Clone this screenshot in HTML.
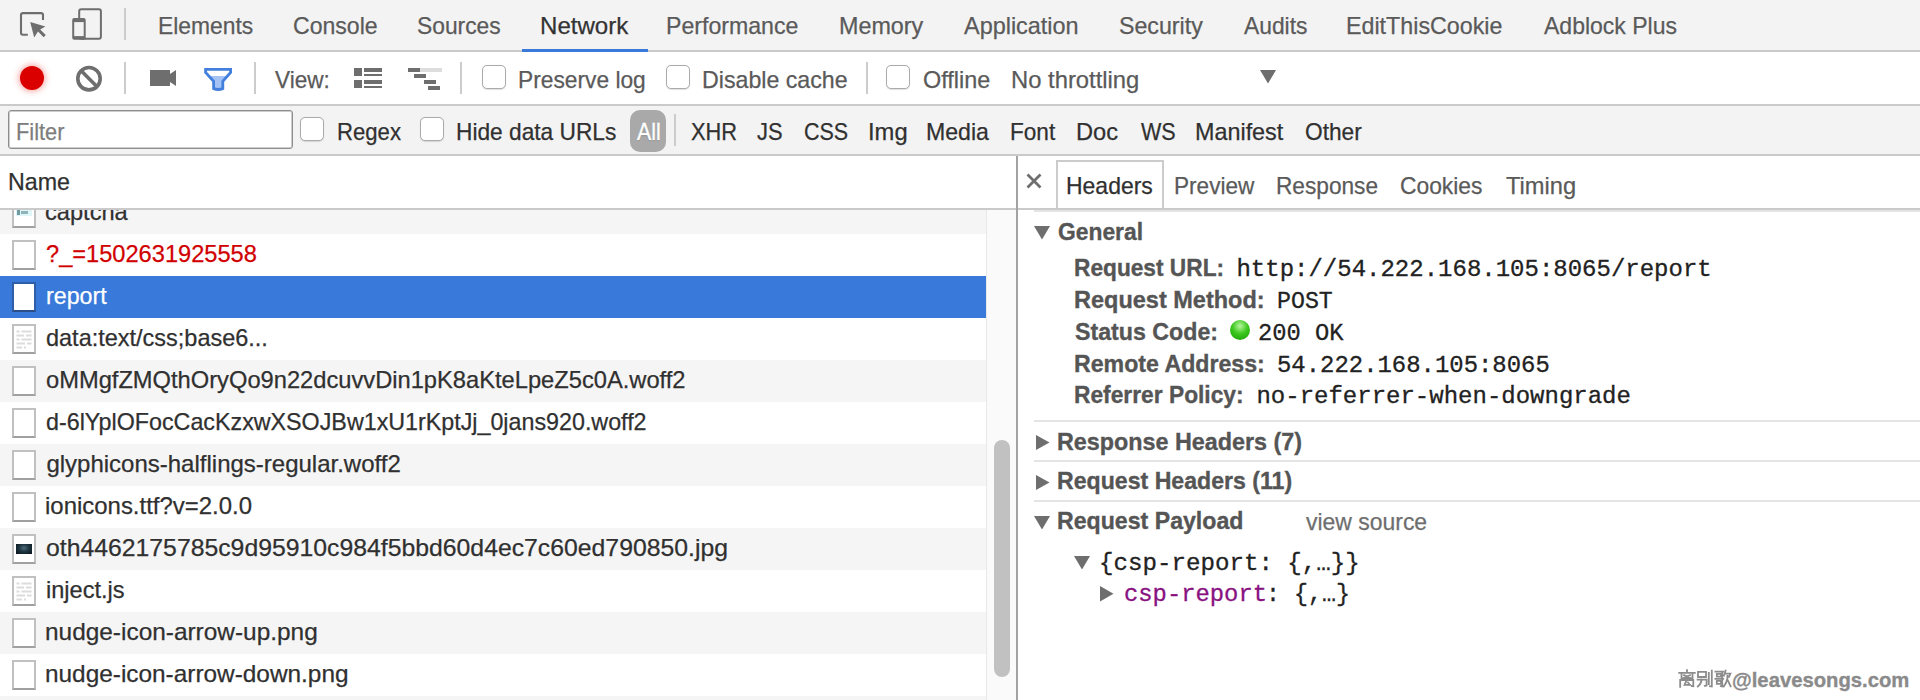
<!DOCTYPE html>
<html><head><meta charset="utf-8"><title>DevTools Network</title>
<style>
html,body{margin:0;padding:0;width:1920px;height:700px;overflow:hidden;background:#fff;font-family:"Liberation Sans",sans-serif;}
#root{position:relative;width:1920px;height:700px;overflow:hidden;}
#root div{position:absolute;}
</style></head><body><div id="root">
<div style="left:0px;top:0px;width:1920px;height:50px;background:#f3f3f3;"></div><div style="left:0px;top:50px;width:1920px;height:2px;background:#cacaca;"></div><svg style="position:absolute;left:14px;top:8px;" width="36" height="34" viewBox="0 0 36 34"><path d="M13.8 26.8 H9 Q7 26.8 7 24.8 V7.1 Q7 5.1 9 5.1 H27 Q29 5.1 29 7.1 V11.9" fill="none" stroke="#6e6e6e" stroke-width="2.1"/><path d="M16.2 14 L31.4 18.6 L26.2 21.4 L31.8 27 L29.6 29.2 L24 23.6 L20.2 29.4 Z" fill="#6e6e6e"/></svg><svg style="position:absolute;left:70px;top:6px;" width="36" height="38" viewBox="0 0 36 38"><rect x="9.2" y="3.2" width="21.7" height="29.5" rx="2" fill="none" stroke="#6e6e6e" stroke-width="2"/><rect x="2.2" y="12.1" width="13.5" height="21.6" rx="2" fill="#6e6e6e"/><rect x="4.2" y="16.1" width="9.5" height="14" fill="#f3f3f3"/></svg><div style="left:124px;top:8px;width:2px;height:32px;background:#cccccc;"></div><div id="t0" style="left:157.50px;top:14.18px;font:400 24px/24px 'Liberation Sans', sans-serif;color:#5a5a5a;white-space:pre;-webkit-text-stroke:0.25px #5a5a5a;transform:scaleX(0.9509);transform-origin:0 0;">Elements</div><div id="t1" style="left:293.44px;top:14.18px;font:400 24px/24px 'Liberation Sans', sans-serif;color:#5a5a5a;white-space:pre;-webkit-text-stroke:0.25px #5a5a5a;transform:scaleX(0.9610);transform-origin:0 0;">Console</div><div id="t2" style="left:417.45px;top:14.18px;font:400 24px/24px 'Liberation Sans', sans-serif;color:#5a5a5a;white-space:pre;-webkit-text-stroke:0.25px #5a5a5a;transform:scaleX(0.9504);transform-origin:0 0;">Sources</div><div id="t3" style="left:539.89px;top:14.18px;font:400 24px/24px 'Liberation Sans', sans-serif;color:#333333;white-space:pre;-webkit-text-stroke:0.25px #333333;transform:scaleX(1.0028);transform-origin:0 0;">Network</div><div id="t4" style="left:666.47px;top:14.18px;font:400 24px/24px 'Liberation Sans', sans-serif;color:#5a5a5a;white-space:pre;-webkit-text-stroke:0.25px #5a5a5a;transform:scaleX(0.9638);transform-origin:0 0;">Performance</div><div id="t5" style="left:838.96px;top:14.18px;font:400 24px/24px 'Liberation Sans', sans-serif;color:#5a5a5a;white-space:pre;-webkit-text-stroke:0.25px #5a5a5a;transform:scaleX(0.9720);transform-origin:0 0;">Memory</div><div id="t6" style="left:964.40px;top:14.18px;font:400 24px/24px 'Liberation Sans', sans-serif;color:#5a5a5a;white-space:pre;-webkit-text-stroke:0.25px #5a5a5a;transform:scaleX(0.9761);transform-origin:0 0;">Application</div><div id="t7" style="left:1118.93px;top:14.18px;font:400 24px/24px 'Liberation Sans', sans-serif;color:#5a5a5a;white-space:pre;-webkit-text-stroke:0.25px #5a5a5a;transform:scaleX(0.9664);transform-origin:0 0;">Security</div><div id="t8" style="left:1244.40px;top:14.18px;font:400 24px/24px 'Liberation Sans', sans-serif;color:#5a5a5a;white-space:pre;-webkit-text-stroke:0.25px #5a5a5a;transform:scaleX(0.9507);transform-origin:0 0;">Audits</div><div id="t9" style="left:1346.46px;top:14.18px;font:400 24px/24px 'Liberation Sans', sans-serif;color:#5a5a5a;white-space:pre;-webkit-text-stroke:0.25px #5a5a5a;transform:scaleX(0.9692);transform-origin:0 0;">EditThisCookie</div><div id="t10" style="left:1544.40px;top:14.18px;font:400 24px/24px 'Liberation Sans', sans-serif;color:#5a5a5a;white-space:pre;-webkit-text-stroke:0.25px #5a5a5a;transform:scaleX(0.9582);transform-origin:0 0;">Adblock Plus</div><div style="left:522px;top:49px;width:126px;height:3px;background:#3879d9;"></div><div style="left:0px;top:52px;width:1920px;height:52px;background:#ffffff;"></div><div style="left:0px;top:104px;width:1920px;height:2px;background:#cacaca;"></div><div style="left:20px;top:66px;width:24px;height:24px;border-radius:50%;background:#db0000;box-shadow:0 0 6px 1px rgba(240,60,60,.5)"></div><svg style="position:absolute;left:74px;top:64px;" width="30" height="30" viewBox="0 0 30 30"><circle cx="15" cy="14.7" r="11.2" fill="none" stroke="#6e6e6e" stroke-width="3.6"/><path d="M7.4 7.1 L22.6 22.3" stroke="#6e6e6e" stroke-width="3.6"/></svg><div style="left:124px;top:62px;width:2px;height:32px;background:#cccccc;"></div><svg style="position:absolute;left:148px;top:66px;" width="32" height="24" viewBox="0 0 32 24"><rect x="2" y="4" width="20" height="16" fill="#6e6e6e"/><path d="M22 8 L28 4 V20 L22 16 Z" fill="#6e6e6e"/></svg><svg style="position:absolute;left:200px;top:64px;" width="36" height="32" viewBox="0 0 36 32"><defs><linearGradient id="fg" gradientUnits="userSpaceOnUse" x1="0" y1="0" x2="0" y2="32"><stop offset="0.38" stop-color="#ffffff"/><stop offset="0.38" stop-color="#a4c2f4"/></linearGradient></defs><path d="M5.6 5.4 H30.6 V8.4 L22.8 17.2 V24.6 Q18.2 26.4 13.6 24.6 V17.2 L5.6 8.4 Z" fill="url(#fg)" stroke="#4380dd" stroke-width="2.8" stroke-linejoin="miter"/></svg><div style="left:254px;top:62px;width:2px;height:32px;background:#cccccc;"></div><div id="t11" style="left:275.40px;top:67.68px;font:400 24px/24px 'Liberation Sans', sans-serif;color:#5a5a5a;white-space:pre;-webkit-text-stroke:0.25px #5a5a5a;transform:scaleX(0.9406);transform-origin:0 0;">View:</div><svg style="position:absolute;left:350px;top:64px;" width="36" height="28" viewBox="0 0 36 28"><rect x="4" y="4" width="8" height="8" fill="#6e6e6e"/><rect x="14" y="4" width="18" height="4" fill="#6e6e6e"/><rect x="14" y="10" width="18" height="2" fill="#6e6e6e"/><rect x="4" y="16" width="8" height="8" fill="#6e6e6e"/><rect x="14" y="16" width="18" height="4" fill="#6e6e6e"/><rect x="14" y="22" width="18" height="2" fill="#6e6e6e"/></svg><svg style="position:absolute;left:404px;top:64px;" width="42" height="30" viewBox="0 0 42 30"><rect x="4" y="4" width="34" height="4" fill="#dddddd"/><rect x="4" y="4" width="12" height="4" fill="#6e6e6e"/><rect x="10" y="10" width="12" height="4" fill="#6e6e6e"/><rect x="20" y="16" width="12" height="4" fill="#6e6e6e"/><rect x="24" y="22" width="12" height="4" fill="#6e6e6e"/></svg><div style="left:460px;top:62px;width:2px;height:32px;background:#cccccc;"></div><div style="left:482px;top:65px;width:22px;height:22px;border:1px solid #ababab;border-radius:5px;background:#fff;box-shadow:0 0.5px 1px rgba(0,0,0,.12)"></div><div id="t12" style="left:517.50px;top:67.68px;font:400 24px/24px 'Liberation Sans', sans-serif;color:#5a5a5a;white-space:pre;-webkit-text-stroke:0.25px #5a5a5a;transform:scaleX(0.9483);transform-origin:0 0;">Preserve log</div><div style="left:666px;top:65px;width:22px;height:22px;border:1px solid #ababab;border-radius:5px;background:#fff;box-shadow:0 0.5px 1px rgba(0,0,0,.12)"></div><div id="t13" style="left:701.72px;top:67.68px;font:400 24px/24px 'Liberation Sans', sans-serif;color:#5a5a5a;white-space:pre;-webkit-text-stroke:0.25px #5a5a5a;transform:scaleX(0.9660);transform-origin:0 0;">Disable cache</div><div style="left:866px;top:62px;width:2px;height:32px;background:#cccccc;"></div><div style="left:886px;top:65px;width:22px;height:22px;border:1px solid #ababab;border-radius:5px;background:#fff;box-shadow:0 0.5px 1px rgba(0,0,0,.12)"></div><div id="t14" style="left:922.67px;top:67.68px;font:400 24px/24px 'Liberation Sans', sans-serif;color:#5a5a5a;white-space:pre;-webkit-text-stroke:0.25px #5a5a5a;transform:scaleX(0.9760);transform-origin:0 0;">Offline</div><div id="t15" style="left:1010.92px;top:67.68px;font:400 24px/24px 'Liberation Sans', sans-serif;color:#5a5a5a;white-space:pre;-webkit-text-stroke:0.25px #5a5a5a;transform:scaleX(0.9918);transform-origin:0 0;">No throttling</div><svg style="position:absolute;left:1258px;top:68px;" width="20" height="18" viewBox="0 0 20 18"><path d="M2 2 H18 L10 15.5 Z" fill="#6e6e6e"/></svg><div style="left:0px;top:106px;width:1920px;height:48px;background:#f3f3f3;"></div><div style="left:0px;top:154px;width:1920px;height:2px;background:#cacaca;"></div><div style="left:8px;top:110px;width:283px;height:37px;border:1px solid #8e8e8e;border-radius:3px;background:#fff;box-shadow:inset 0 0 0 1px #cdcdcd"></div><div id="t16" style="left:16.09px;top:119.93px;font:400 24px/24px 'Liberation Sans', sans-serif;color:#7d7d7d;white-space:pre;-webkit-text-stroke:0.25px #7d7d7d;transform:scaleX(0.9073);transform-origin:0 0;">Filter</div><div style="left:300px;top:117px;width:22px;height:22px;border:1px solid #ababab;border-radius:5px;background:#fff;box-shadow:0 0.5px 1px rgba(0,0,0,.12)"></div><div id="t17" style="left:336.81px;top:120.18px;font:400 24px/24px 'Liberation Sans', sans-serif;color:#303030;white-space:pre;-webkit-text-stroke:0.25px #303030;transform:scaleX(0.9216);transform-origin:0 0;">Regex</div><div style="left:420px;top:117px;width:22px;height:22px;border:1px solid #ababab;border-radius:5px;background:#fff;box-shadow:0 0.5px 1px rgba(0,0,0,.12)"></div><div id="t18" style="left:456.26px;top:120.18px;font:400 24px/24px 'Liberation Sans', sans-serif;color:#303030;white-space:pre;-webkit-text-stroke:0.25px #303030;transform:scaleX(0.9463);transform-origin:0 0;">Hide data URLs</div><div style="left:630px;top:110px;width:36px;height:42px;border-radius:10px;background:#a9a9a9"></div><div id="t19" style="left:636.86px;top:120.18px;font:400 24px/24px 'Liberation Sans', sans-serif;color:#ffffff;white-space:pre;-webkit-text-stroke:0.25px #ffffff;transform:scaleX(0.8864);transform-origin:0 0;text-shadow:0 1px 1px rgba(0,0,0,.4);-webkit-text-stroke:0.5px #fff;">All</div><div style="left:674px;top:114px;width:2px;height:32px;background:#cccccc;"></div><div id="t20" style="left:690.95px;top:120.18px;font:400 24px/24px 'Liberation Sans', sans-serif;color:#303030;white-space:pre;-webkit-text-stroke:0.25px #303030;transform:scaleX(0.9084);transform-origin:0 0;">XHR</div><div id="t21" style="left:757.00px;top:120.18px;font:400 24px/24px 'Liberation Sans', sans-serif;color:#303030;white-space:pre;-webkit-text-stroke:0.25px #303030;transform:scaleX(0.9124);transform-origin:0 0;">JS</div><div id="t22" style="left:803.76px;top:120.18px;font:400 24px/24px 'Liberation Sans', sans-serif;color:#303030;white-space:pre;-webkit-text-stroke:0.25px #303030;transform:scaleX(0.8946);transform-origin:0 0;">CSS</div><div id="t23" style="left:867.67px;top:120.18px;font:400 24px/24px 'Liberation Sans', sans-serif;color:#303030;white-space:pre;-webkit-text-stroke:0.25px #303030;transform:scaleX(0.9905);transform-origin:0 0;">Img</div><div id="t24" style="left:926.47px;top:120.18px;font:400 24px/24px 'Liberation Sans', sans-serif;color:#303030;white-space:pre;-webkit-text-stroke:0.25px #303030;transform:scaleX(0.9630);transform-origin:0 0;">Media</div><div id="t25" style="left:1010.27px;top:120.18px;font:400 24px/24px 'Liberation Sans', sans-serif;color:#303030;white-space:pre;-webkit-text-stroke:0.25px #303030;transform:scaleX(0.9408);transform-origin:0 0;">Font</div><div id="t26" style="left:1076.43px;top:120.18px;font:400 24px/24px 'Liberation Sans', sans-serif;color:#303030;white-space:pre;-webkit-text-stroke:0.25px #303030;transform:scaleX(0.9847);transform-origin:0 0;">Doc</div><div id="t27" style="left:1140.90px;top:120.18px;font:400 24px/24px 'Liberation Sans', sans-serif;color:#303030;white-space:pre;-webkit-text-stroke:0.25px #303030;transform:scaleX(0.8980);transform-origin:0 0;">WS</div><div id="t28" style="left:1195.20px;top:120.18px;font:400 24px/24px 'Liberation Sans', sans-serif;color:#303030;white-space:pre;-webkit-text-stroke:0.25px #303030;transform:scaleX(0.9733);transform-origin:0 0;">Manifest</div><div id="t29" style="left:1304.96px;top:120.18px;font:400 24px/24px 'Liberation Sans', sans-serif;color:#303030;white-space:pre;-webkit-text-stroke:0.25px #303030;transform:scaleX(0.9450);transform-origin:0 0;">Other</div><div style="left:0px;top:156px;width:1016px;height:544px;background:#ffffff;"></div><div style="left:0;top:210px;width:986px;height:490px;overflow:hidden"><div style="left:0px;top:-18px;width:986px;height:42px;background:#f5f5f5;"></div><div style="left:12px;top:-12px;width:20px;height:26px;border:2px solid #c0c0c0;border-bottom:2px solid #a0a0a0;background:#ffffff"></div><div style="left:16px;top:0px;width:16px;height:6px;background:#dff5f7;"></div><div style="left:17px;top:0px;width:2.5px;height:5px;background:#6f9aa0;"></div><div style="left:20.5px;top:1px;width:7px;height:3px;background:#8fb4b8;"></div><div id="t30" style="left:45.32px;top:-9.82px;font:400 24px/24px 'Liberation Sans', sans-serif;color:#303030;white-space:pre;-webkit-text-stroke:0.25px #303030;transform:scaleX(0.9845);transform-origin:0 0;">captcha</div><div style="left:0px;top:24px;width:986px;height:42px;background:#ffffff;"></div><div style="left:12px;top:30px;width:20px;height:26px;border:2px solid #c0c0c0;border-bottom:2px solid #a0a0a0;background:#ffffff"></div><div id="t31" style="left:46.40px;top:32.18px;font:400 24px/24px 'Liberation Sans', sans-serif;color:#d10000;white-space:pre;-webkit-text-stroke:0.25px #d10000;transform:scaleX(0.9841);transform-origin:0 0;">?_=1502631925558</div><div style="left:0px;top:66px;width:986px;height:42px;background:#3879d9;"></div><div style="left:12px;top:72px;width:20px;height:26px;border:2px solid #2e5ea8;border-bottom:2px solid #2b4f88;background:#ffffff"></div><div id="t32" style="left:45.51px;top:74.18px;font:400 24px/24px 'Liberation Sans', sans-serif;color:#ffffff;white-space:pre;-webkit-text-stroke:0.25px #ffffff;transform:scaleX(0.9685);transform-origin:0 0;">report</div><div style="left:0px;top:108px;width:986px;height:42px;background:#ffffff;"></div><div style="left:12px;top:114px;width:20px;height:26px;border:2px solid #c0c0c0;border-bottom:2px solid #a0a0a0;background:#ffffff"></div><svg style="position:absolute;left:12px;top:114px" width="24" height="30"><rect x="4.5" y="6.5" width="3.0" height="2" fill="#dcdcdc"/><rect x="9.5" y="6.5" width="10.0" height="2" fill="#dcdcdc"/><rect x="4.5" y="10.5" width="7.5" height="2" fill="#dcdcdc"/><rect x="14" y="10.5" width="5.5" height="2" fill="#dcdcdc"/><rect x="4.5" y="14.5" width="3.0" height="2" fill="#dcdcdc"/><rect x="9.5" y="14.5" width="10.0" height="2" fill="#dcdcdc"/><rect x="4.5" y="18.5" width="8.5" height="2" fill="#dcdcdc"/><rect x="15" y="18.5" width="4.5" height="2" fill="#dcdcdc"/><rect x="4.5" y="22.5" width="5.5" height="2" fill="#dcdcdc"/><rect x="12" y="22.5" width="2" height="2" fill="#dcdcdc"/></svg><div id="t33" style="left:46.40px;top:116.18px;font:400 24px/24px 'Liberation Sans', sans-serif;color:#303030;white-space:pre;-webkit-text-stroke:0.25px #303030;transform:scaleX(0.9783);transform-origin:0 0;">data:text/css;base6...</div><div style="left:0px;top:150px;width:986px;height:42px;background:#f5f5f5;"></div><div style="left:12px;top:156px;width:20px;height:26px;border:2px solid #c0c0c0;border-bottom:2px solid #a0a0a0;background:#ffffff"></div><div id="t34" style="left:46.39px;top:158.18px;font:400 24px/24px 'Liberation Sans', sans-serif;color:#303030;white-space:pre;-webkit-text-stroke:0.25px #303030;transform:scaleX(0.9871);transform-origin:0 0;">oMMgfZMQthOryQo9n22dcuvvDin1pK8aKteLpeZ5c0A.woff2</div><div style="left:0px;top:192px;width:986px;height:42px;background:#ffffff;"></div><div style="left:12px;top:198px;width:20px;height:26px;border:2px solid #c0c0c0;border-bottom:2px solid #a0a0a0;background:#ffffff"></div><div id="t35" style="left:46.41px;top:200.18px;font:400 24px/24px 'Liberation Sans', sans-serif;color:#303030;white-space:pre;-webkit-text-stroke:0.25px #303030;transform:scaleX(0.9696);transform-origin:0 0;">d-6lYplOFocCacKzxwXSOJBw1xU1rKptJj_0jans920.woff2</div><div style="left:0px;top:234px;width:986px;height:42px;background:#f5f5f5;"></div><div style="left:12px;top:240px;width:20px;height:26px;border:2px solid #c0c0c0;border-bottom:2px solid #a0a0a0;background:#ffffff"></div><div id="t36" style="left:46.38px;top:242.18px;font:400 24px/24px 'Liberation Sans', sans-serif;color:#303030;white-space:pre;-webkit-text-stroke:0.25px #303030;">glyphicons-halflings-regular.woff2</div><div style="left:0px;top:276px;width:986px;height:42px;background:#ffffff;"></div><div style="left:12px;top:282px;width:20px;height:26px;border:2px solid #c0c0c0;border-bottom:2px solid #a0a0a0;background:#ffffff"></div><div id="t37" style="left:45.48px;top:284.18px;font:400 24px/24px 'Liberation Sans', sans-serif;color:#303030;white-space:pre;-webkit-text-stroke:0.25px #303030;transform:scaleX(0.9977);transform-origin:0 0;">ionicons.ttf?v=2.0.0</div><div style="left:0px;top:318px;width:986px;height:42px;background:#f5f5f5;"></div><div style="left:12px;top:324px;width:20px;height:26px;border:2px solid #c0c0c0;border-bottom:2px solid #a0a0a0;background:#ffffff"></div><div style="left:16px;top:334px;width:16px;height:10px;background:radial-gradient(ellipse at 50% 40%, #4d6a78 0%, #1d3440 45%, #0a1216 100%)"></div><div id="t38" style="left:46.35px;top:326.18px;font:400 24px/24px 'Liberation Sans', sans-serif;color:#303030;white-space:pre;-webkit-text-stroke:0.25px #303030;transform:scaleX(1.0323);transform-origin:0 0;">oth4462175785c9d95910c984f5bbd60d4ec7c60ed790850.jpg</div><div style="left:0px;top:360px;width:986px;height:42px;background:#ffffff;"></div><div style="left:12px;top:366px;width:20px;height:26px;border:2px solid #c0c0c0;border-bottom:2px solid #a0a0a0;background:#ffffff"></div><svg style="position:absolute;left:12px;top:366px" width="24" height="30"><rect x="4.5" y="6.5" width="3.0" height="2" fill="#dcdcdc"/><rect x="9.5" y="6.5" width="10.0" height="2" fill="#dcdcdc"/><rect x="4.5" y="10.5" width="7.5" height="2" fill="#dcdcdc"/><rect x="14" y="10.5" width="5.5" height="2" fill="#dcdcdc"/><rect x="4.5" y="14.5" width="3.0" height="2" fill="#dcdcdc"/><rect x="9.5" y="14.5" width="10.0" height="2" fill="#dcdcdc"/><rect x="4.5" y="18.5" width="8.5" height="2" fill="#dcdcdc"/><rect x="15" y="18.5" width="4.5" height="2" fill="#dcdcdc"/><rect x="4.5" y="22.5" width="5.5" height="2" fill="#dcdcdc"/><rect x="12" y="22.5" width="2" height="2" fill="#dcdcdc"/></svg><div id="t39" style="left:45.50px;top:368.18px;font:400 24px/24px 'Liberation Sans', sans-serif;color:#303030;white-space:pre;-webkit-text-stroke:0.25px #303030;transform:scaleX(0.9826);transform-origin:0 0;">inject.js</div><div style="left:0px;top:402px;width:986px;height:42px;background:#f5f5f5;"></div><div style="left:12px;top:408px;width:20px;height:26px;border:2px solid #c0c0c0;border-bottom:2px solid #a0a0a0;background:#ffffff"></div><div id="t40" style="left:45.46px;top:410.18px;font:400 24px/24px 'Liberation Sans', sans-serif;color:#303030;white-space:pre;-webkit-text-stroke:0.25px #303030;transform:scaleX(1.0170);transform-origin:0 0;">nudge-icon-arrow-up.png</div><div style="left:0px;top:444px;width:986px;height:42px;background:#ffffff;"></div><div style="left:12px;top:450px;width:20px;height:26px;border:2px solid #c0c0c0;border-bottom:2px solid #a0a0a0;background:#ffffff"></div><div id="t41" style="left:45.46px;top:452.18px;font:400 24px/24px 'Liberation Sans', sans-serif;color:#303030;white-space:pre;-webkit-text-stroke:0.25px #303030;transform:scaleX(1.0156);transform-origin:0 0;">nudge-icon-arrow-down.png</div><div style="left:0px;top:486px;width:986px;height:42px;background:#f5f5f5;"></div></div><div style="left:0px;top:156px;width:1016px;height:52px;background:#ffffff;"></div><div id="t42" style="left:7.92px;top:169.98px;font:400 24px/24px 'Liberation Sans', sans-serif;color:#303030;white-space:pre;-webkit-text-stroke:0.25px #303030;transform:scaleX(0.9685);transform-origin:0 0;">Name</div><div style="left:0px;top:208px;width:1016px;height:2px;background:#cacaca;"></div><div style="left:986px;top:210px;width:30px;height:490px;background:#fafafa;border-left:1px solid #e8e8e8;box-sizing:border-box;"></div><div style="left:994px;top:440px;width:16px;height:237px;border-radius:8px;background:#c1c1c1"></div><div style="left:1016px;top:156px;width:2px;height:544px;background:#a3a3a3;"></div><div style="left:1018px;top:156px;width:902px;height:544px;background:#ffffff;"></div><div style="left:1018px;top:208px;width:902px;height:2px;background:#cacaca;"></div><div style="left:1034px;top:210px;width:886px;height:2px;background:#e4e4e4;"></div><svg style="position:absolute;left:1024px;top:171px;" width="20" height="20" viewBox="0 0 20 20"><path d="M3.5 3.5 L16.5 16.5 M16.5 3.5 L3.5 16.5" stroke="#6e6e6e" stroke-width="2.8"/></svg><div style="left:1056px;top:160px;width:104px;height:46px;border:2px solid #cccccc;border-bottom:none;background:#fff"></div><div id="t43" style="left:1065.99px;top:173.98px;font:400 24px/24px 'Liberation Sans', sans-serif;color:#303030;white-space:pre;-webkit-text-stroke:0.25px #303030;transform:scaleX(0.9573);transform-origin:0 0;">Headers</div><div id="t44" style="left:1173.52px;top:173.98px;font:400 24px/24px 'Liberation Sans', sans-serif;color:#5a5a5a;white-space:pre;-webkit-text-stroke:0.25px #5a5a5a;transform:scaleX(0.9418);transform-origin:0 0;">Preview</div><div id="t45" style="left:1276.01px;top:173.98px;font:400 24px/24px 'Liberation Sans', sans-serif;color:#5a5a5a;white-space:pre;-webkit-text-stroke:0.25px #5a5a5a;transform:scaleX(0.9444);transform-origin:0 0;">Response</div><div id="t46" style="left:1400.45px;top:173.98px;font:400 24px/24px 'Liberation Sans', sans-serif;color:#5a5a5a;white-space:pre;-webkit-text-stroke:0.25px #5a5a5a;transform:scaleX(0.9498);transform-origin:0 0;">Cookies</div><div id="t47" style="left:1506.02px;top:173.98px;font:400 24px/24px 'Liberation Sans', sans-serif;color:#5a5a5a;white-space:pre;-webkit-text-stroke:0.25px #5a5a5a;transform:scaleX(0.9861);transform-origin:0 0;">Timing</div><svg style="position:absolute;left:1034px;top:226px;" width="16" height="13.5" viewBox="0 0 16 13.5"><path d="M0 0 H16 L8.0 13.5 Z" fill="#6e6e6e"/></svg><div id="t48" style="left:1057.95px;top:219.88px;font:700 24px/24px 'Liberation Sans', sans-serif;color:#555555;white-space:pre;-webkit-text-stroke:0.35px #555555;transform:scaleX(0.9510);transform-origin:0 0;">General</div><div id="t49" style="left:1074.05px;top:255.88px;font:700 24px/24px 'Liberation Sans', sans-serif;color:#555555;white-space:pre;-webkit-text-stroke:0.35px #555555;transform:scaleX(0.9458);transform-origin:0 0;">Request URL:</div><div id="t50" style="left:1236.44px;top:257.81px;font:400 24px/24px 'Liberation Mono', monospace;color:#222222;white-space:pre;-webkit-text-stroke:0.3px #222222;">http://54.222.168.105:8065/report</div><div id="t51" style="left:1074.02px;top:288.08px;font:700 24px/24px 'Liberation Sans', sans-serif;color:#555555;white-space:pre;-webkit-text-stroke:0.35px #555555;transform:scaleX(0.9795);transform-origin:0 0;">Request Method:</div><div id="t52" style="left:1277.48px;top:290.01px;font:400 24px/24px 'Liberation Mono', monospace;color:#222222;white-space:pre;-webkit-text-stroke:0.3px #222222;transform:scaleX(0.9681);transform-origin:0 0;">POST</div><div id="t53" style="left:1074.93px;top:319.58px;font:700 24px/24px 'Liberation Sans', sans-serif;color:#555555;white-space:pre;-webkit-text-stroke:0.35px #555555;transform:scaleX(0.9666);transform-origin:0 0;">Status Code:</div><div id="t54" style="left:1257.99px;top:321.51px;font:400 24px/24px 'Liberation Mono', monospace;color:#222222;white-space:pre;-webkit-text-stroke:0.3px #222222;transform:scaleX(0.9901);transform-origin:0 0;">200 OK</div><div id="t55" style="left:1074.04px;top:351.58px;font:700 24px/24px 'Liberation Sans', sans-serif;color:#555555;white-space:pre;-webkit-text-stroke:0.35px #555555;transform:scaleX(0.9644);transform-origin:0 0;">Remote Address:</div><div id="t56" style="left:1277.48px;top:353.51px;font:400 24px/24px 'Liberation Mono', monospace;color:#222222;white-space:pre;-webkit-text-stroke:0.3px #222222;transform:scaleX(0.9969);transform-origin:0 0;">54.222.168.105:8065</div><div id="t57" style="left:1074.05px;top:383.18px;font:700 24px/24px 'Liberation Sans', sans-serif;color:#555555;white-space:pre;-webkit-text-stroke:0.35px #555555;transform:scaleX(0.9489);transform-origin:0 0;">Referrer Policy:</div><div id="t58" style="left:1256.44px;top:385.11px;font:400 24px/24px 'Liberation Mono', monospace;color:#222222;white-space:pre;-webkit-text-stroke:0.3px #222222;">no-referrer-when-downgrade</div><div style="left:1230px;top:320px;width:20px;height:20px;border-radius:50%;background:radial-gradient(circle at 50% 30%, #b8f5a0 0%, #3cc81e 45%, #199a06 100%)"></div><div style="left:1034px;top:420px;width:886px;height:2px;background:#e4e4e4;"></div><svg style="position:absolute;left:1036px;top:434.5px;" width="13.5" height="15" viewBox="0 0 13.5 15"><path d="M0 0 L13.5 7.5 L0 15 Z" fill="#6e6e6e"/></svg><div id="t59" style="left:1057.03px;top:429.58px;font:700 24px/24px 'Liberation Sans', sans-serif;color:#555555;white-space:pre;-webkit-text-stroke:0.35px #555555;transform:scaleX(0.9722);transform-origin:0 0;">Response Headers (7)</div><div style="left:1034px;top:460px;width:886px;height:2px;background:#e4e4e4;"></div><svg style="position:absolute;left:1036px;top:474.5px;" width="13.5" height="15" viewBox="0 0 13.5 15"><path d="M0 0 L13.5 7.5 L0 15 Z" fill="#6e6e6e"/></svg><div id="t60" style="left:1057.04px;top:469.48px;font:700 24px/24px 'Liberation Sans', sans-serif;color:#555555;white-space:pre;-webkit-text-stroke:0.35px #555555;transform:scaleX(0.9632);transform-origin:0 0;">Request Headers (11)</div><div style="left:1034px;top:500px;width:886px;height:2px;background:#e4e4e4;"></div><svg style="position:absolute;left:1034px;top:516px;" width="16" height="13.5" viewBox="0 0 16 13.5"><path d="M0 0 H16 L8.0 13.5 Z" fill="#6e6e6e"/></svg><div id="t61" style="left:1057.04px;top:509.38px;font:700 24px/24px 'Liberation Sans', sans-serif;color:#555555;white-space:pre;-webkit-text-stroke:0.35px #555555;transform:scaleX(0.9639);transform-origin:0 0;">Request Payload</div><div id="t62" style="left:1305.84px;top:510.18px;font:400 24px/24px 'Liberation Sans', sans-serif;color:#6e6e6e;white-space:pre;-webkit-text-stroke:0.25px #6e6e6e;transform:scaleX(0.9557);transform-origin:0 0;">view source</div><svg style="position:absolute;left:1074px;top:556px;" width="16" height="13.5" viewBox="0 0 16 13.5"><path d="M0 0 H16 L8.0 13.5 Z" fill="#6e6e6e"/></svg><div id="t63" style="left:1098.97px;top:552.11px;font:400 24px/24px 'Liberation Mono', monospace;color:#222222;white-space:pre;-webkit-text-stroke:0.3px #222222;transform:scaleX(1.0060);transform-origin:0 0;">{csp-report: {,…}}</div><svg style="position:absolute;left:1100px;top:586px;" width="13.5" height="15.5" viewBox="0 0 13.5 15.5"><path d="M0 0 L13.5 7.75 L0 15.5 Z" fill="#6e6e6e"/></svg><div id="t64" style="left:1124.01px;top:583.11px;font:400 24px/24px 'Liberation Mono', monospace;color:#881280;white-space:pre;-webkit-text-stroke:0.3px #881280;transform:scaleX(0.9929);transform-origin:0 0;">csp-report</div><div id="t65" style="left:1265.95px;top:583.11px;font:400 24px/24px 'Liberation Mono', monospace;color:#222222;white-space:pre;-webkit-text-stroke:0.3px #222222;transform:scaleX(0.9709);transform-origin:0 0;">: {,…}</div><div id="t66" style="left:1732.04px;top:668.72px;font:700 21px/21px 'Liberation Sans', sans-serif;color:#8a8a8a;white-space:pre;-webkit-text-stroke:0.35px #8a8a8a;transform:scaleX(0.9643);transform-origin:0 0;">@leavesongs.com</div><svg style="position:absolute;left:1674px;top:664px;" width="66" height="28" viewBox="0 0 66 28"><g fill="none" stroke="#8c8c8c" stroke-width="1.8" stroke-linecap="square"><path d="M13 6.2 V8.5 M5.2 8.9 H20.8 M7.5 10.5 V14.5 H18.5 V10.5 M10 11.2 L16 13.8 M16 11.2 L10 13.8 M6.2 22.8 V16 H19.3 V22.2 L17.8 22 M12.5 16.5 L10.5 20.8 H16 M14 18.5 L15.8 20.8"/><path d="M24 7.8 H32 V13 H24 Z M23.6 15.6 H32.6 V21.5 L30.8 21.8 M27.6 15.6 Q27.2 20 23.8 22.4 M34.8 9 V20 M37.8 6.6 V22.4 L36 22.2"/><path d="M41.4 7.6 H49.2 M42.8 9.8 H47 V12.6 H42.8 Z M41.4 14.8 H49.2 M42.8 16.8 H47 V19.8 H42.8 Z M48.2 7.6 V22.4 L46.8 22.2 M51.6 6.6 L50 11.6 M50.8 9.6 H56.4 L55 12.8 M53.4 12 V14.5 Q52.6 19 49.8 22.4 M53.6 16 L56.6 22.4"/></g></svg>
</div></body></html>
